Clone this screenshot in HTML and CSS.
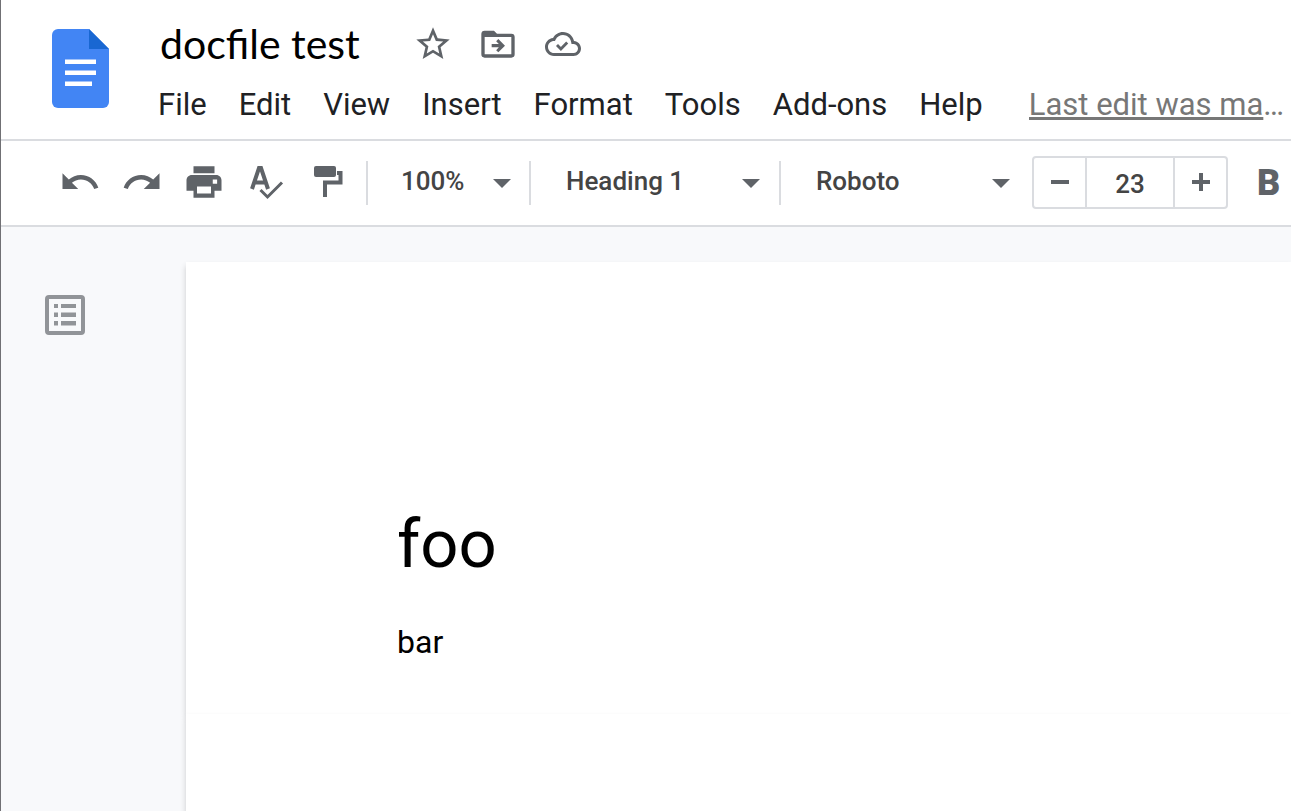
FILE: index.html
```html
<!DOCTYPE html>
<html lang="en">
<head>
    <meta charset="UTF-8">
    <meta name="viewport" content="width=device-width, initial-scale=1.0">
    <title>docfile test</title>
    <link rel="stylesheet" href="styles.css">
</head>
<body>

    <header class="header">
        <a class="logo" href="#" aria-label="Docs home">
            <svg width="58" height="80" viewBox="0 0 58 80">
                <path fill="#4285f4" d="M6 0h31l20 20v53a6 6 0 0 1-6 6H6a6 6 0 0 1-6-6V6a6 6 0 0 1 6-6z"/>
                <path fill="#1967d2" d="M37 0l20 20H37z"/>
                <path fill="#fff" d="M13 30.500h31v4.500H13zM13 41.500h31v4.500H13zM13 52.500h27v4.500H13z"/>
            </svg>
        </a>
        <div class="head-main">
            <div class="title-row">
                <h1 class="doc-title">docfile test</h1>
                <button class="title-btn" aria-label="Star">
                    <svg width="40" height="40" viewBox="0 0 24 24"><path d="M22 9.24l-7.19-.62L12 2 9.19 8.63 2 9.24l5.46 4.73L5.82 21 12 17.27 18.18 21l-1.63-7.03L22 9.24zM12 15.4l-3.76 2.27 1-4.28-3.32-2.88 4.38-.38L12 6.1l1.71 4.04 4.38.38-3.32 2.88 1 4.28L12 15.4z"/></svg>
                </button>
                <button class="title-btn" aria-label="Move">
                    <svg width="40" height="40" viewBox="0 0 24 24">
                        <path fill-rule="evenodd" d="M20 5.8h-8.600L9.600 4H4a2 2 0 0 0-2 2v12.200a2 2 0 0 0 2 2h16a2 2 0 0 0 2-2V7.800a2 2 0 0 0-2-2zM20 18.200H4V7.800h16z"/>
                        <path d="M12.200 9l-1.300 1.300 1.600 1.700H8.200v2h4.300l-1.600 1.700 1.300 1.300 4-4z"/>
                    </svg>
                </button>
                <button class="title-btn" aria-label="Document status">
                    <svg width="36" height="36" viewBox="0 0 24 24">
                        <path d="M19.35 10.04C18.67 6.59 15.64 4 12 4 9.11 4 6.6 5.64 5.35 8.04 2.34 8.36 0 10.91 0 14c0 3.31 2.69 6 6 6h13c2.76 0 5-2.24 5-5 0-2.64-2.05-4.78-4.65-4.96zM19 18H6c-2.21 0-4-1.79-4-4 0-2.05 1.53-3.76 3.56-3.97l1.07-.11.5-.95C8.08 7.14 9.94 6 12 6c2.62 0 4.88 1.86 5.39 4.43l.3 1.5 1.53.11c1.56.1 2.78 1.41 2.78 2.96 0 1.65-1.35 3-3 3z"/>
                        <path class="line" stroke-width="1.9" d="M8 12.700l2.600 2.600 4.200-4.300"/>
                    </svg>
                </button>
            </div>
            <nav class="menu">
                <button>File</button>
                <button>Edit</button>
                <button>View</button>
                <button>Insert</button>
                <button>Format</button>
                <button>Tools</button>
                <button>Add-ons</button>
                <button>Help</button>
                <div class="last-edit"><a href="#">Last edit was made seconds ago</a></div>
            </nav>
        </div>
    </header>

    <div class="toolbar">
        <div class="tools">
            <button aria-label="Undo">
                <svg width="42" height="42" viewBox="0 0 24 24"><path d="M12.5 8c-2.65 0-5.05.99-6.9 2.6L2 7v9h9l-3.62-3.62c1.39-1.16 3.16-1.88 5.12-1.88 3.54 0 6.55 2.31 7.6 5.5l2.37-.78C21.08 11.03 17.15 8 12.5 8z"/></svg>
            </button>
            <button aria-label="Redo">
                <svg width="42" height="42" viewBox="0 0 24 24"><path d="M18.4 10.6C16.55 8.99 14.15 8 11.5 8c-4.65 0-8.58 3.03-9.96 7.22L3.9 16c1.05-3.19 4.05-5.5 7.6-5.5 1.95 0 3.73.72 5.12 1.88L13 16h9V7l-3.6 3.6z"/></svg>
            </button>
            <button aria-label="Print">
                <svg width="42" height="42" viewBox="0 0 24 24"><path fill-rule="evenodd" d="M6 3h12v4H6zM19 8H5c-1.66 0-3 1.34-3 3v6h4v4h12v-4h4v-6c0-1.66-1.34-3-3-3zM16 18.5H8v-4h8zM17 10.5h2.5V13H17z"/></svg>
            </button>
            <button aria-label="Spelling and grammar check">
                <svg width="42" height="42" viewBox="0 0 42 42">
                    <path class="line" stroke-width="4" d="M7 28L14 7h2l7 21M10 21.500h10"/>
                    <path class="line" stroke-width="3" d="M15.500 29l7 7L37 21.500"/>
                </svg>
            </button>
            <button aria-label="Paint format">
                <svg width="42" height="42" viewBox="0 0 42 42">
                    <rect x="7" y="5" width="22" height="11" rx="2"/>
                    <path class="line" stroke-width="4" d="M30 12h3.500v9.500H18V36"/>
                </svg>
            </button>
        </div>

        <div class="picker zoom">
            <select aria-label="Zoom"><option>100%</option></select>
            <svg class="arrow" width="18" height="9" viewBox="0 0 18 9"><path d="M0 0h18L9 9z"/></svg>
        </div>
        <div class="picker">
            <select aria-label="Styles"><option>Heading 1</option></select>
            <svg class="arrow" width="18" height="9" viewBox="0 0 18 9"><path d="M0 0h18L9 9z"/></svg>
        </div>
        <div class="picker">
            <select aria-label="Font"><option>Roboto</option></select>
            <svg class="arrow" width="18" height="9" viewBox="0 0 18 9"><path d="M0 0h18L9 9z"/></svg>
        </div>

        <div class="font-size">
            <button aria-label="Decrease font size">
                <svg width="18" height="18" viewBox="0 0 18 18"><path d="M0 7h18v4H0z"/></svg>
            </button>
            <input type="text" value="23" aria-label="Font size">
            <button aria-label="Increase font size">
                <svg width="18" height="18" viewBox="0 0 18 18"><path d="M7 0h4v7h7v4h-7v7H7v-7H0V7h7z"/></svg>
            </button>
        </div>
        <button class="bold" aria-label="Bold">B</button>
    </div>

    <div class="workspace">
        <aside class="side">
            <button aria-label="Show document outline">
                <svg width="40" height="40" viewBox="0 0 40 40">
                    <rect x="2" y="2" width="36" height="36" rx="2" fill="none" stroke="#919498" stroke-width="4"/>
                    <path fill="#919498" d="M9 9h4v4H9zM16 9h15v4H16zM9 17.500h4v4.500H9zM16 17.500h15v4.500H16zM9 26h4v4.500H9zM16 26h15v4.500H16z"/>
                </svg>
            </button>
        </aside>
        <main class="pages">
            <article class="page">
                <h2>foo</h2>
                <p>bar</p>
            </article>
            <div class="page page-rest"></div>
        </main>
    </div>

</body>
</html>
```
FILE: styles.css
```css
:root{
    --icon: #5f6368;
    --line: #dadce0;
    --canvas: #f8f9fb;
    --text: #202124;
}
*{
    box-sizing: border-box;
}
body{
    margin: 0;
    height: 100vh;
    display: flex;
    flex-direction: column;
    overflow: hidden;
    border-left: 1px solid #707074;
    background: #fff;
    color: var(--text);
    font-family: Roboto, sans-serif;
}
button, input, select{
    margin: 0;
    padding: 0;
    border: 0;
    background: none;
    color: inherit;
    font: inherit;
}
svg{
    display: block;
    flex: none;
    fill: var(--icon);
}
.line{
    fill: none;
    stroke: var(--icon);
}

/* header */
.header{
    display: flex;
    flex: none;
    height: 141px;
    border-bottom: 2px solid var(--line);
}
.logo{
    padding: 29px 48px 0 51px;
}
.head-main{
    flex: 1;
    min-width: 0;
    padding-top: 18px;
}
.title-row{
    display: flex;
    align-items: center;
    gap: 25px;
    height: 52px;
    padding-left: 2px;
}
.doc-title{
    margin: 0 28px 0 0;
    color: #000;
    font-family: Lato, sans-serif;
    font-size: 41px;
    font-weight: 400;
    line-height: 52px;
}
.title-btn{
    display: flex;
    flex: none;
    align-items: center;
    justify-content: center;
    width: 40px;
}
.menu{
    display: flex;
    align-items: center;
    gap: 32px;
    height: 68px;
    padding-right: 5px;
    font-size: 31px;
    white-space: nowrap;
}
.last-edit{
    flex: 1;
    min-width: 0;
    margin-left: 14px;
    overflow: hidden;
    text-overflow: ellipsis;
    color: #777;
}
.last-edit a{
    color: inherit;
}

/* toolbar */
.toolbar{
    display: flex;
    flex: none;
    align-items: center;
    height: 86px;
    border-bottom: 2px solid var(--line);
}
.tools{
    display: flex;
    gap: 20px;
    margin-bottom: 2px;
    padding: 0 17px 0 58px;
}
.picker{
    display: flex;
    flex: none;
    align-items: center;
    width: 250px;
    height: 44px;
    padding: 0 19px 0 35px;
    border-left: 2px solid var(--line);
    color: #444;
    font-size: 26px;
    font-weight: 500;
}
.picker.zoom{
    width: 163px;
    padding: 0 18px 0 33px;
}
.picker select{
    flex: 1;
    min-width: 0;
    padding-bottom: 4px;
    appearance: none;
}
.font-size{
    display: flex;
    flex: none;
    width: 196px;
    height: 53px;
    margin: 0 0 2px 3px;
    border: 2px solid var(--line);
    border-radius: 4px;
}
.font-size button{
    display: flex;
    flex: none;
    align-items: center;
    justify-content: center;
    width: 51px;
}
.font-size input{
    flex: 1;
    min-width: 0;
    padding-top: 3px;
    border: solid var(--line);
    border-width: 0 2px;
    color: #444;
    font-size: 26px;
    font-weight: 500;
    text-align: center;
}
.bold{
    margin-left: 29px;
    color: var(--icon);
    font-size: 36px;
    font-weight: 900;
}

/* document area */
.workspace{
    display: flex;
    flex: 1;
    min-height: 0;
    background: var(--canvas);
}
.side{
    flex: none;
    width: 185px;
    padding: 68px 0 0 44px;
}
.pages{
    display: flex;
    flex: 1;
    flex-direction: column;
    padding-top: 35px;
}
.page{
    padding: 240px 211px 52px;
    background: #fff;
    box-shadow: 0 4px 6px rgba(0, 0, 0, .18);
    color: #000;
}
.page h2{
    margin: 0;
    font-size: 67px;
    font-weight: 400;
    line-height: 84px;
}
.page p{
    margin: 36px 0 0;
    font-size: 32px;
    line-height: 40px;
}
.page-rest{
    flex: 1;
    padding: 0;
}
```
